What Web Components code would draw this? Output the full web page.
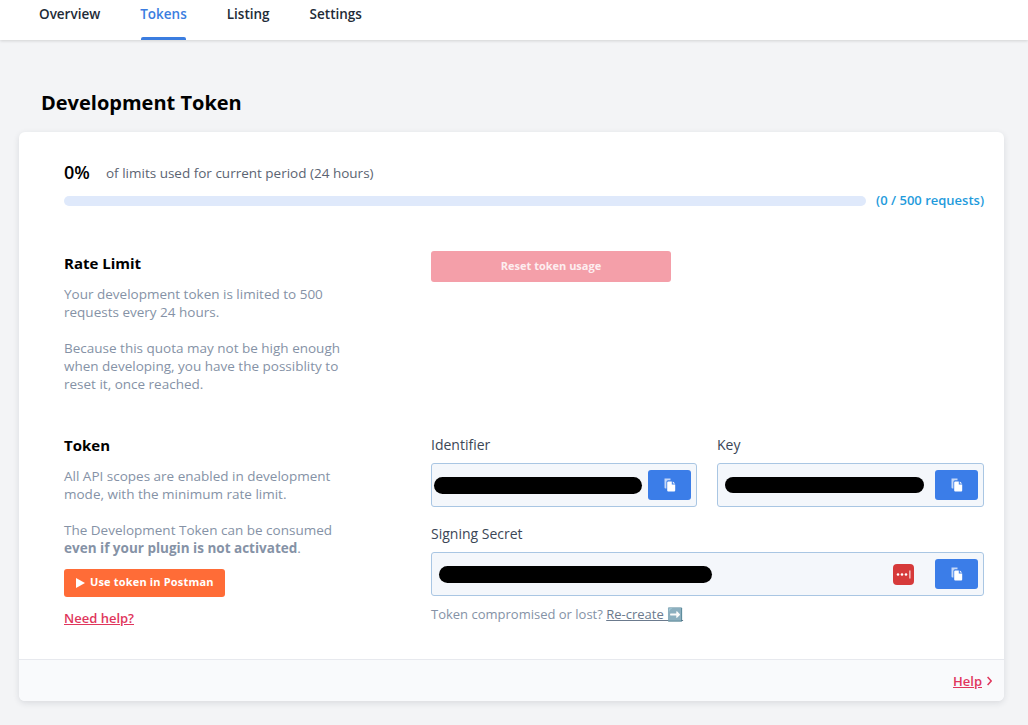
<!DOCTYPE html>
<html>
<head>
<meta charset="utf-8">
<title>Development Token</title>
<style>
  html, body { margin: 0; padding: 0; height: 725px; overflow: hidden; }
  body { background: #f3f4f6; font-family: "Open Sans", sans-serif; color: #000; }
</style>
</head>
<body>
<top-tabs></top-tabs>
<page-title>Development Token</page-title>
<token-card>
  <usage-meter></usage-meter>
  <section-row heading="Rate Limit" style="margin-top:45px">
    <p>Your development token is limited to 500 requests every 24 hours.</p>
    <p>Because this quota may not be high enough when developing, you have the possiblity to reset it, once reached.</p>
    <reset-button slot="side"></reset-button>
  </section-row>
  <section-row heading="Token" style="margin-top:30px">
    <p>All API scopes are enabled in development mode, with the minimum rate limit.</p>
    <p>The Development Token can be consumed <b>even if your plugin is not activated</b>.</p>
    <postman-button></postman-button>
    <help-link>Need help?</help-link>
    <token-fields slot="side"></token-fields>
  </section-row>
</token-card>

<script>
const COPY_ICON = `<svg width="14" height="14" viewBox="0 0 14 14" aria-hidden="true">
  <path d="M1.5 0.5h6v1.8H5a1.6 1.6 0 0 0-1.6 1.6v6.6H2.6a1.1 1.1 0 0 1-1.1-1.1z" fill="#c5d8f7"/>
  <path d="M5.2 3.4h3.6v3h3.4v6.1a1 1 0 0 1-1 1H5.2a1 1 0 0 1-1-1V4.4a1 1 0 0 1 1-1z M9.8 3.4l2.4 2.2H9.8z" fill="#fff"/>
</svg>`;

class TopTabs extends HTMLElement {
  constructor() {
    super();
    this.attachShadow({mode: 'open'}).innerHTML = `
    <style>
      :host {
        display: flex;
        height: 40px;
        padding-left: 39px;
        gap: 40px;
        background: #fff;
        box-shadow: 0 1px 3px rgba(0, 0, 0, 0.14);
        font-size: 13.5px;
        font-weight: 600;
        color: #222b37;
      }
      a { display: block; height: 28px; line-height: 28px; padding-bottom: 12px; position: relative; }
      a.on { color: #3b7de0; }
      a.on::after {
        content: '';
        position: absolute;
        left: 1px;
        right: 1px;
        bottom: 0;
        height: 3px;
        background: #3b7de0;
        border-radius: 2px 2px 0 0;
      }
    </style>
    <a>Overview</a><a class="on">Tokens</a><a>Listing</a><a>Settings</a>`;
  }
}

class PageTitle extends HTMLElement {
  constructor() {
    super();
    this.attachShadow({mode: 'open'}).innerHTML = `
    <style>
      :host {
        display: block;
        margin: 48px 0 14px 41px;
        height: 30px;
        line-height: 30px;
        font-size: 20px;
        font-weight: 700;
        color: #000;
      }
    </style>
    <slot></slot>`;
  }
}

class TokenCard extends HTMLElement {
  constructor() {
    super();
    this.attachShadow({mode: 'open'}).innerHTML = `
    <style>
      :host {
        display: block;
        width: 985px;
        height: 569px;
        margin-left: 19px;
        background: #fff;
        border-radius: 6px;
        box-shadow: 0 2px 6px rgba(30, 40, 60, 0.12);
        overflow: hidden;
      }
      .wrap { display: flex; flex-direction: column; height: 100%; }
      .body { flex: 1; padding: 27px 20px 0 45px; }
      footer {
        height: 41px;
        border-top: 1px solid #e7e9ee;
        background: #f9fafc;
        display: flex;
        align-items: center;
        justify-content: flex-end;
        gap: 5px;
        padding-right: 12px;
      }
      a { font-size: 13px; font-weight: 600; color: #e0365c; text-decoration: underline; }
    </style>
    <div class="wrap">
      <div class="body"><slot></slot></div>
      <footer>
        <a>Help</a>
        <svg width="5" height="10" viewBox="0 0 5 10"><path d="M.6 1l3.6 4-3.6 4" fill="none" stroke="#e0365c" stroke-width="1.5"/></svg>
      </footer>
    </div>`;
  }
}

class UsageMeter extends HTMLElement {
  constructor() {
    super();
    this.attachShadow({mode: 'open'}).innerHTML = `
    <style>
      :host { display: block; }
      .head { display: flex; align-items: center; height: 26px; }
      .pct { font-size: 18px; font-weight: 600; color: #000; width: 42px; }
      .txt { font-size: 13.5px; color: #5b6472; padding-top: 1px; }
      .bar { display: flex; align-items: center; gap: 10px; margin-top: 9px; height: 14px; }
      .track { flex: 1; height: 10px; border-radius: 5px; background: #dfe9fb; }
      .count { font-size: 13px; font-weight: 600; color: #1f9bdc; margin-top: -2px; }
    </style>
    <div class="head"><span class="pct">0%</span><span class="txt">of limits used for current period (24 hours)</span></div>
    <div class="bar"><div class="track"></div><span class="count">(0 / 500 requests)</span></div>`;
  }
}

class SectionRow extends HTMLElement {
  constructor() {
    super();
    this.attachShadow({mode: 'open'}).innerHTML = `
    <style>
      :host { display: grid; grid-template-columns: 290px 1fr; column-gap: 77px; }
      h3 { margin: 0 0 12px; font-size: 15px; line-height: 20px; font-weight: 700; color: #000; }
      .text { font-size: 13.5px; line-height: 18px; color: #8592a6; }
      ::slotted(p) { margin: 0 0 18px; }
      ::slotted(p:nth-of-type(2)) { margin-bottom: 12px; }
    </style>
    <div class="text"><h3></h3><slot></slot></div>
    <div><slot name="side"></slot></div>`;
    this.shadowRoot.querySelector('h3').textContent = this.getAttribute('heading');
  }
}

class ResetButton extends HTMLElement {
  constructor() {
    super();
    this.attachShadow({mode: 'open'}).innerHTML = `
    <style>
      :host {
        display: flex;
        align-items: center;
        justify-content: center;
        box-sizing: border-box;
        width: 240px;
        height: 31px;
        padding-bottom: 2px;
        margin-top: -2px;
        border-radius: 3px;
        background: #f49fa9;
        color: #fdeef0;
        font-size: 11px;
        font-weight: 700;
      }
    </style>
    Reset token usage`;
  }
}

class PostmanButton extends HTMLElement {
  constructor() {
    super();
    this.attachShadow({mode: 'open'}).innerHTML = `
    <style>
      :host {
        display: inline-flex;
        align-items: center;
        gap: 5px;
        box-sizing: border-box;
        width: 161px;
        height: 28px;
        padding-left: 12px;
        border-radius: 3px;
        background: #ff6c37;
        color: #fff;
        font-size: 11px;
        font-weight: 700;
        letter-spacing: 0.17px;
        vertical-align: top;
      }
      span { margin-top: -2px; }
    </style>
    <svg width="9" height="10" viewBox="0 0 9 10"><path d="M0 0l9 5-9 5z" fill="#fff"/></svg>
    <span>Use token in Postman</span>`;
  }
}

class HelpLink extends HTMLElement {
  constructor() {
    super();
    this.attachShadow({mode: 'open'}).innerHTML = `
    <style>
      :host { display: block; margin-top: 12px; font-size: 13px; line-height: 18px; font-weight: 600; color: #e0365c; text-decoration: underline; }
    </style>
    <slot></slot>`;
  }
}

class TokenField extends HTMLElement {
  constructor() {
    super();
    const secret = this.hasAttribute('secret');
    this.attachShadow({mode: 'open'}).innerHTML = `
    <style>
      :host { display: block; }
      label { display: block; font-size: 14px; line-height: 20px; color: #3b4656; margin-bottom: 8px; }
      .box {
        box-sizing: border-box;
        display: flex;
        align-items: center;
        height: 44px;
        padding: 0 5px 0 var(--pad, 2px);
        background: #f4f7fb;
        border: 1px solid #a9c6e3;
        border-radius: 3px;
      }
      .mask { height: var(--mask-h, 16px); width: var(--mask, 208px); background: #000; border-radius: 9px; }
      .end { margin-left: auto; display: flex; align-items: center; gap: 21px; }
      .copy {
        display: flex;
        align-items: center;
        justify-content: center;
        width: 43px;
        height: 30px;
        background: #3b7de8;
        border-radius: 3px;
      }
      .lp {
        display: ${secret ? 'flex' : 'none'};
        align-items: center;
        justify-content: center;
        width: 21px;
        height: 21px;
        border-radius: 4px;
        background: #d63a3a;
      }
    </style>
    <label></label>
    <div class="box">
      <div class="mask"></div>
      <div class="end">
        <span class="lp"><svg width="15" height="9" viewBox="0 0 15 9">
          <circle cx="2" cy="4.5" r="1.3" fill="#fff"/><circle cx="6" cy="4.5" r="1.3" fill="#fff"/><circle cx="10" cy="4.5" r="1.3" fill="#fff"/>
          <rect x="13.4" y="0.5" width="1" height="8" fill="#fff"/></svg></span>
        <span class="copy">${COPY_ICON}</span>
      </div>
    </div>`;
    this.shadowRoot.querySelector('label').textContent = this.getAttribute('label');
  }
}

class TokenFields extends HTMLElement {
  constructor() {
    super();
    this.attachShadow({mode: 'open'}).innerHTML = `
    <style>
      :host { display: grid; grid-template-columns: 266px 267px; column-gap: 20px; row-gap: 17px; }
      .wide { grid-column: 1 / 3; }
      .wide p { margin: 9px 0 0; font-size: 13px; line-height: 18px; color: #8592a6; }
      a { color: #6b7a8d; text-decoration: underline; }
    </style>
    <token-field label="Identifier" style="--mask:208px;--mask-h:17px"></token-field>
    <token-field label="Key" style="--mask:199px;--pad:7px"></token-field>
    <div class="wide">
      <token-field secret label="Signing Secret" style="--mask:273px;--pad:7px;--mask-h:17px"></token-field>
      <p>Token compromised or lost? <a>Re-create ➡️</a></p>
    </div>`;
  }
}

customElements.define('top-tabs', TopTabs);
customElements.define('page-title', PageTitle);
customElements.define('token-card', TokenCard);
customElements.define('usage-meter', UsageMeter);
customElements.define('section-row', SectionRow);
customElements.define('reset-button', ResetButton);
customElements.define('postman-button', PostmanButton);
customElements.define('help-link', HelpLink);
customElements.define('token-field', TokenField);
customElements.define('token-fields', TokenFields);
</script>
</body>
</html>
